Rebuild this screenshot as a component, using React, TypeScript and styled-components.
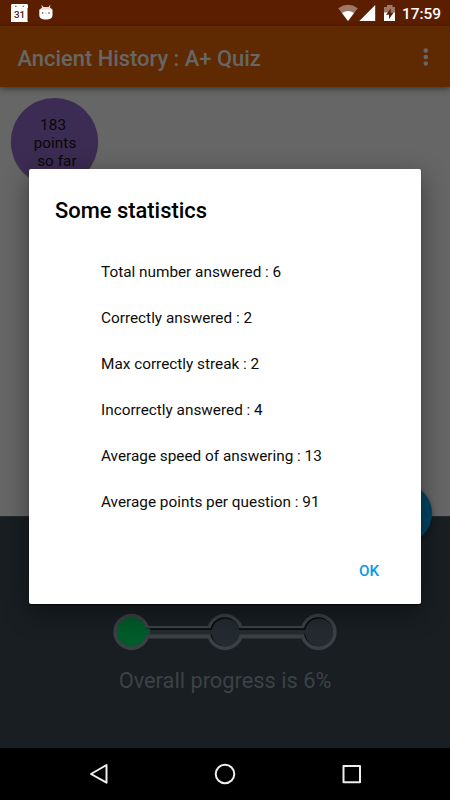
import React from 'react';
import styled, { createGlobalStyle } from 'styled-components';

const GlobalStyle = createGlobalStyle`
  * { box-sizing: border-box; }
  body { margin: 0; font-family: Roboto, "Liberation Sans", sans-serif; }
  svg { display: block; }
`;

const Screen = styled.div`
  position: relative;
  width: 450px;
  height: 800px;
  display: flex;
  flex-direction: column;
  overflow: hidden;
  background: #666;
`;

const StatusBar = styled.header`
  flex: 0 0 26px;
  height: 26px;
  display: flex;
  justify-content: space-between;
  background: #5b1e00;
`;

const Clock = styled.span`
  font-size: 15.4px;
  font-weight: 500;
  line-height: 26px;
  padding-top: 1px;
  height: 26px;
  color: #fff;
  width: 48px;
`;

const StatusRight = styled.div`
  display: flex;
  height: 26px;
`;

const AppBar = styled.div`
  position: relative;
  flex: 0 0 61px;
  display: flex;
  align-items: center;
  justify-content: space-between;
  padding: 2px 0 0 17.5px;
  background: #5f2a02;
  box-shadow: 0 2px 6px rgba(0, 0, 0, 0.45);
`;

const Title = styled.h1`
  margin: 0;
  padding-top: 1px;
  font-size: 21.9px;
  font-weight: 500;
  color: #666;
  white-space: nowrap;
`;

const Content = styled.main`
  flex: 0 0 429px;
  padding: 11px;
`;

const Points = styled.div`
  width: 87px;
  height: 87px;
  border-radius: 50%;
  background: #3c2b52;
  box-shadow: 0 1px 1px rgba(0, 0, 0, 0.45);
  padding: 18px 0 0 1px;
  font-size: 15.2px;
  line-height: 18px;
  letter-spacing: 0.1px;
  text-align: center;
  white-space: pre;
  color: #080808;
`;

const Progress = styled.section`
  flex: 1;
  display: flex;
  flex-direction: column;
  align-items: center;
  padding-top: 94px;
  background: #181e22;
  border-top: 1px solid #23282b;
`;

const ProgressText = styled.p`
  margin: 13px 0 0;
  font-size: 21.8px;
  line-height: 30px;
  color: #3c4245;
  white-space: nowrap;
`;

const NavBar = styled.nav`
  flex: 0 0 52px;
  background: #000;
`;

const Fab = styled.div`
  position: absolute;
  left: 371px;
  top: 483px;
  width: 61px;
  height: 61px;
  border-radius: 50%;
  background: #004361;
  box-shadow: 0 2px 5px rgba(0, 0, 0, 0.4);
`;

const Dialog = styled.div`
  position: absolute;
  left: 29px;
  top: 169px;
  width: 392px;
  height: 435px;
  display: flex;
  flex-direction: column;
  background: #fff;
  border-radius: 2px;
  box-shadow: 0 1px 1px rgba(0, 0, 0, 0.7), 0 8px 26px rgba(0, 0, 0, 0.42);
  padding: 28px 26px 0;
`;

const DialogTitle = styled.h2`
  margin: 0 0 37px;
  font-size: 21.9px;
  line-height: 28px;
  font-weight: 500;
  color: #000;
`;

const Stat = styled.div`
  padding-left: 46px;
  height: 46px;
  font-size: 15.33px;
  line-height: 20px;
  color: #0c0c0c;
  white-space: nowrap;
`;

const OkButton = styled.button`
  align-self: flex-end;
  margin: 23px 16px 0 0;
  padding: 0;
  border: 0;
  background: none;
  font: 500 15.2px/20px Roboto, sans-serif;
  color: #059bea;
`;

const stats: [string, number][] = [
  ['Total number answered', 6],
  ['Correctly answered', 2],
  ['Max correctly streak', 2],
  ['Incorrectly answered', 4],
  ['Average speed of answering', 13],
  ['Average points per question', 91],
];

const Notifications = () => (
  <svg width="60" height="26" viewBox="0 0 60 26">
    <path d="M12 4h15l1 1v3h-.5v13l.5 1H11V8.500h.3L11 5z" fill="#fff" />
    <path d="M15 6.400h1.500M22.500 6.400H24" stroke="#8d624f" strokeWidth="1.200" />
    <text x="19.600" y="18" textAnchor="middle" fontSize="9.800" fontWeight="500" fill="#4a2010">31</text>
    <path d="M39.300 9.500h13.200V15c0 3-2.300 4.600-6.600 4.600S39.300 18 39.300 15z" fill="#fff" />
    <path d="M40 10q.5-2 2-2.500L41.300 4.500 43.500 7h5l2-2.500-.6 3q2 .7 2.200 2.500z" fill="#fff" opacity=".85" />
    <circle cx="42.700" cy="13" r=".75" fill="#5b1e00" />
    <circle cx="49" cy="13" r=".75" fill="#5b1e00" />
    <path d="M44.800 13.600h2" stroke="#d6c3bb" strokeWidth=".7" />
  </svg>
);

const Signals = () => (
  <svg width="64" height="26" viewBox="0 0 64 26">
    <path d="M10 21L.2 8.200Q10 1.500 19.800 8.200z" fill="#9d7866" />
    <path d="M10 21L4 13q6-4 12 0z" fill="#fff" />
    <path d="M37.200 5v16H21.400z" fill="#fff" />
    <path d="M46 7h3V5h5.500v2H57v6H46z" fill="#9d7866" />
    <path d="M46 12.500h11V21H46z" fill="#fff" />
    <path d="M52.800 8.500L48 14.700h3V19l4.700-6.500h-3z" fill="#5b1e00" />
  </svg>
);

const Overflow = () => (
  <svg width="50" height="59" viewBox="0 0 50 59" fill="#666">
    <circle cx="25.800" cy="22.400" r="2.250" />
    <circle cx="25.800" cy="28.900" r="2.250" />
    <circle cx="25.800" cy="35.400" r="2.250" />
  </svg>
);

const Steps = () => (
  <svg width="224" height="42" viewBox="113 611 224 42">
    <g fill="#3a4043">
      <path d="M131 626h187v12.500H131z" />
      {[131.5, 225, 318.5].map((x) => (
        <circle key={x} cx={x} cy="632" r="18.200" />
      ))}
    </g>
    <g fill="#050708">
      <path d="M131 628.200h187v2H131z" />
      <circle cx="224.800" cy="631.800" r="14.500" />
      <circle cx="318.300" cy="631.800" r="14.500" />
    </g>
    <g fill="#232b31">
      <path d="M131 629.800h187v4.800H131z" />
      <circle cx="225.500" cy="632.400" r="14" />
      <circle cx="319" cy="632.400" r="14" />
    </g>
    <path d="M131 628.500h19v6.300h-19z" fill="#005b2a" />
    <circle cx="131.500" cy="632" r="14.600" fill="#005b2a" />
  </svg>
);

const NavIcons = () => (
  <svg width="450" height="52" viewBox="0 748 450 52" fill="none" stroke="#eee" strokeWidth="2" strokeLinejoin="round">
    <path d="M106.500 765v17.700L91 774z" />
    <circle cx="225" cy="774" r="9.300" />
    <path d="M343.500 766h16.500v16.300h-16.500z" />
  </svg>
);

export default function App() {
  return (
    <>
      <GlobalStyle />
      <Screen>
        <StatusBar>
          <Notifications />
          <StatusRight>
            <Signals />
            <Clock>17:59</Clock>
          </StatusRight>
        </StatusBar>
        <AppBar>
          <Title>Ancient History : A+ Quiz</Title>
          <Overflow />
        </AppBar>
        <Content>
          <Points>{'183 \npoints\n so far'}</Points>
        </Content>
        <Progress>
          <Steps />
          <ProgressText>Overall progress is 6%</ProgressText>
        </Progress>
        <NavBar>
          <NavIcons />
        </NavBar>
        <Fab />
        <Dialog role="dialog">
          <DialogTitle>Some statistics</DialogTitle>
          {stats.map(([label, value]) => (
            <Stat key={label}>{`${label} : ${value}`}</Stat>
          ))}
          <OkButton>OK</OkButton>
        </Dialog>
      </Screen>
    </>
  );
}
